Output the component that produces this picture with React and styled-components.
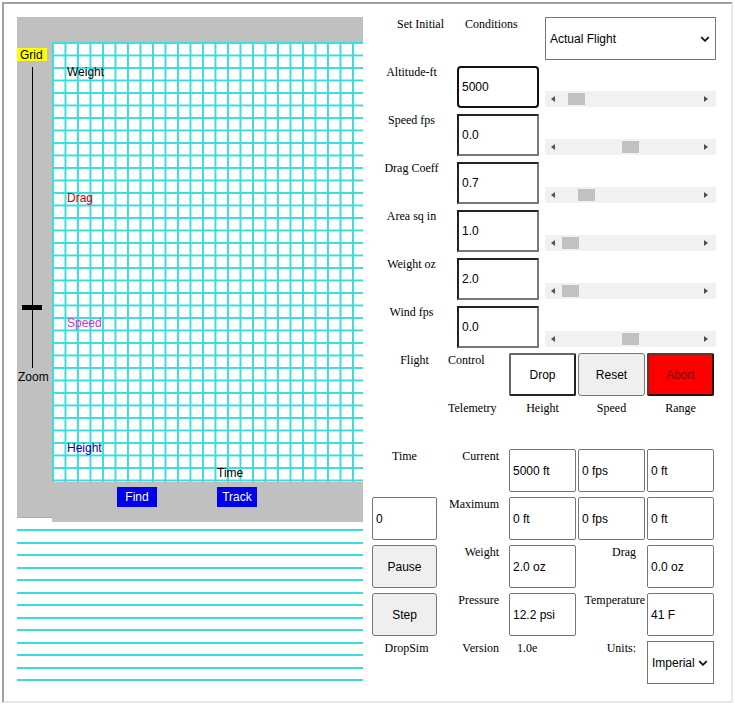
import React from 'react';
import styled, { createGlobalStyle } from 'styled-components';

const GlobalStyle = createGlobalStyle`
  body {
    margin: 0;
    background: #fff;
    font-family: "Liberation Serif", "Times New Roman", serif;
  }
`;

const sans = `"Liberation Sans", Arial, sans-serif`;
const cyan = '#3adcdc';

const Frame = styled.div`
  box-sizing: border-box;
  margin: 2px;
  width: 731px;
  height: 701px;
  border: 2px solid;
  border-color: #a0a0a0 #e8e8e8 #e8e8e8 #a0a0a0;
  padding: 13px 0 0 13px;
  display: flex;
  align-items: flex-start;
  gap: 5px;
`;

/* ---------- left: plot ---------- */

const Display = styled.div`
  width: 346px;
  display: flex;
  flex-direction: column;
`;

const Scope = styled.div`
  display: flex;
  align-items: flex-start;
  margin-bottom: -5px;
`;

const Rail = styled.div`
  box-sizing: border-box;
  width: 35px;
  height: 500px;
  background: #c0c0c0;
  padding-top: 31px;
  display: flex;
  flex-direction: column;
  align-items: flex-start;
  font-family: ${sans};
  font-size: 12px;
`;

const GridTag = styled.span`
  box-sizing: border-box;
  width: 30px;
  height: 13px;
  line-height: 15px;
  padding-left: 3px;
  background: #ffff00;
  color: #000;
  overflow: hidden;
`;

const ZoomLine = styled.div`
  position: relative;
  width: 1px;
  height: 301px;
  margin: 6px 0 0 15px;
  background: #000;
`;

const ZoomThumb = styled.div`
  position: absolute;
  left: -10px;
  width: 20px;
  height: 5px;
  background: #000;
`;

const ZoomText = styled.span`
  margin: 2px 0 0 1px;
  line-height: 14px;
`;

const Graph = styled.div`
  position: relative;
  z-index: 1;
  width: 311px;
  display: flex;
  flex-direction: column;
  background: #c0c0c0;
`;

const GraphTop = styled.div`
  height: 25px;
`;

const Plot = styled.div`
  position: relative;
  height: 440px;
  background-color: #fff;
  background-image:
    linear-gradient(to right, ${cyan} 0 1.5px, transparent 1.5px),
    linear-gradient(to bottom, ${cyan} 0 1.5px, transparent 1.5px);
  background-size: 12.5px 12.5px;
  font-family: ${sans};
  font-size: 12px;
  line-height: 14px;
`;

const Trace = styled.span`
  position: absolute;
  left: ${(p) => p.$x}px;
  top: ${(p) => p.$y}px;
  color: ${(p) => p.$color};
`;

const GraphFoot = styled.div`
  height: 40px;
  box-sizing: border-box;
  padding: 5px 0 0 65px;
  display: flex;
  align-items: flex-start;
  gap: 60px;
`;

const BlueButton = styled.button`
  width: 40px;
  height: 20px;
  padding: 0;
  border: none;
  background: #0000ee;
  color: #fff;
  font-family: ${sans};
  font-size: 12px;
`;

const Lines = styled.div`
  height: 172px;
  background: repeating-linear-gradient(
    to bottom,
    ${cyan} 0 1.5px,
    transparent 1.5px 12.5px
  );
`;

/* ---------- right: controls ---------- */

const Controls = styled.div`
  width: 350px;
  display: flex;
  flex-direction: column;
  gap: 5px;
  font-family: "Liberation Serif", "Times New Roman", serif;
  font-size: 12px;
  color: #000;
`;

const SetupRow = styled.div`
  height: 43px;
  display: grid;
  grid-template-columns: 89px 88px 171px;
`;

const TeleRow = styled.div`
  height: 43px;
  padding-left: 4px;
  display: grid;
  grid-template-columns: 65px 68px 67px 67px 67px;
  column-gap: 2px;
`;

const Label = styled.div`
  text-align: ${(p) => p.$align || 'center'};
  padding-left: ${(p) => p.$pl || 0}px;
  padding-right: ${(p) => p.$pr || 0}px;
  white-space: nowrap;
`;

const SetInput = styled.input`
  box-sizing: border-box;
  width: 82px;
  height: 42px;
  margin-top: 1px;
  padding: 0 0 0 3px;
  border: 2px solid;
  border-color: ${(p) => (p.$focus ? '#111' : '#222 #777 #777 #222')};
  border-radius: ${(p) => (p.$focus ? '4px' : '0')};
  outline: none;
  font-family: ${sans};
  font-size: 12px;
  color: #000;
  background: #fff;
`;

const Scroll = styled.div`
  position: relative;
  align-self: end;
  margin-bottom: 1px;
  height: 16px;
  background: #f1f1f1;
  display: flex;
  align-items: center;
  justify-content: space-between;
  padding: 0 8px 0 6px;
`;

const Arrow = styled.span`
  width: 0;
  height: 0;
  border-top: 3.5px solid transparent;
  border-bottom: 3.5px solid transparent;
  ${(p) => (p.$dir === 'left' ? 'border-right' : 'border-left')}: 4px solid #505050;
`;

const ScrollThumb = styled.div`
  position: absolute;
  top: 2px;
  width: 17px;
  height: 12px;
  background: #c1c1c1;
`;

const SelectWrap = styled.div`
  position: relative;
  width: ${(p) => p.$w}px;
  height: 43px;
`;

const Select = styled.select`
  appearance: none;
  box-sizing: border-box;
  width: 100%;
  height: 100%;
  padding: 0 0 0 4px;
  border: 1px solid #767676;
  border-radius: 0;
  background: #fff;
  color: #000;
  font-family: ${sans};
  font-size: 12px;
`;

const Chevron = styled.svg`
  position: absolute;
  right: ${(p) => p.$r}px;
  top: 50%;
  margin-top: -3px;
  pointer-events: none;
`;

const tones = {
  drop: 'background:#fff; border:2px solid; border-color:#666 #222 #222 #666; color:#000; border-radius:2px;',
  reset: 'background:#efefef; border:1px solid #767676; color:#000; border-radius:3px;',
  abort: 'background:#ff0000; border:2px solid; border-color:#6a3030 #2a1010 #2a1010 #6a3030; color:#7a0000; border-radius:2px;',
};

const CtlButton = styled.button`
  box-sizing: border-box;
  width: 100%;
  height: 43px;
  padding: 0;
  font-family: ${sans};
  font-size: 12px;
  ${(p) => tones[p.$tone]}
`;

const ReadBox = styled.input`
  box-sizing: border-box;
  width: 100%;
  height: 43px;
  padding: 0 0 0 3px;
  border: 1px solid #767676;
  border-radius: 2px;
  outline: none;
  font-family: ${sans};
  font-size: 12px;
  color: #000;
  background: #fff;
`;

const setup = [
  { label: 'Altitude-ft', value: '5000', thumb: 23, focus: true },
  { label: 'Speed fps', value: '0.0', thumb: 77 },
  { label: 'Drag Coeff', value: '0.7', thumb: 33 },
  { label: 'Area sq in', value: '1.0', thumb: 17 },
  { label: 'Weight oz', value: '2.0', thumb: 17 },
  { label: 'Wind fps', value: '0.0', thumb: 77 },
];

const Down = ({ r }) => (
  <Chevron $r={r} width="10" height="6" viewBox="0 0 10 6">
    <path d="M1.2 1.2 L5 4.8 L8.8 1.2" fill="none" stroke="#111" strokeWidth="1.8" />
  </Chevron>
);

const App = () => {
  return (
    <>
      <GlobalStyle />
      <Frame>
        <Display>
          <Scope>
            <Rail>
              <GridTag>Grid</GridTag>
              <ZoomLine>
                <ZoomThumb style={{ top: 238 }} />
              </ZoomLine>
              <ZoomText>Zoom</ZoomText>
            </Rail>
            <Graph>
              <GraphTop />
              <Plot>
                <Trace $x={15} $y={23} $color="#000">Weight</Trace>
                <Trace $x={15} $y={149} $color="#cc0000">Drag</Trace>
                <Trace $x={15} $y={274} $color="#cc33cc">Speed</Trace>
                <Trace $x={15} $y={399} $color="#0000aa">Height</Trace>
                <Trace $x={165} $y={424} $color="#000">Time</Trace>
              </Plot>
              <GraphFoot>
                <BlueButton>Find</BlueButton>
                <BlueButton>Track</BlueButton>
              </GraphFoot>
            </Graph>
          </Scope>
          <Lines />
        </Display>

        <Controls>
          <SetupRow>
            <Label $align="right" $pr={13}>Set Initial</Label>
            <Label $align="left" $pl={8}>Conditions</Label>
            <SelectWrap $w={171}>
              <Select defaultValue="actual">
                <option value="actual">Actual Flight</option>
                <option value="vacuum">Vacuum</option>
              </Select>
              <Down r={6} />
            </SelectWrap>
          </SetupRow>

          {setup.map((row) => (
            <SetupRow key={row.label}>
              <Label $pr={2}>{row.label}</Label>
              <SetInput $focus={row.focus} defaultValue={row.value} readOnly />
              <Scroll>
                <Arrow $dir="left" />
                <ScrollThumb style={{ left: row.thumb }} />
                <Arrow $dir="right" />
              </Scroll>
            </SetupRow>
          ))}

          <TeleRow>
            <Label $pl={20}>Flight</Label>
            <Label $align="left" $pl={9}>Control</Label>
            <CtlButton $tone="drop">Drop</CtlButton>
            <CtlButton $tone="reset">Reset</CtlButton>
            <CtlButton $tone="abort">Abort</CtlButton>
          </TeleRow>

          <TeleRow>
            <span />
            <Label $align="left" $pl={9}>Telemetry</Label>
            <Label>Height</Label>
            <Label>Speed</Label>
            <Label>Range</Label>
          </TeleRow>

          <TeleRow>
            <Label>Time</Label>
            <Label $align="right" $pr={8}>Current</Label>
            <ReadBox defaultValue="5000 ft" readOnly />
            <ReadBox defaultValue="0 fps" readOnly />
            <ReadBox defaultValue="0 ft" readOnly />
          </TeleRow>

          <TeleRow>
            <ReadBox defaultValue="0" readOnly />
            <Label $align="right" $pr={8}>Maximum</Label>
            <ReadBox defaultValue="0 ft" readOnly />
            <ReadBox defaultValue="0 fps" readOnly />
            <ReadBox defaultValue="0 ft" readOnly />
          </TeleRow>

          <TeleRow>
            <CtlButton $tone="reset">Pause</CtlButton>
            <Label $align="right" $pr={8}>Weight</Label>
            <ReadBox defaultValue="2.0 oz" readOnly />
            <Label $align="right" $pr={9}>Drag</Label>
            <ReadBox defaultValue="0.0 oz" readOnly />
          </TeleRow>

          <TeleRow>
            <CtlButton $tone="reset">Step</CtlButton>
            <Label $align="right" $pr={8}>Pressure</Label>
            <ReadBox defaultValue="12.2 psi" readOnly />
            <Label $align="right">Temperature</Label>
            <ReadBox defaultValue="41 F" readOnly />
          </TeleRow>

          <TeleRow>
            <Label $pl={4}>DropSim</Label>
            <Label $align="right" $pr={8}>Version</Label>
            <Label $align="left" $pl={8}>1.0e</Label>
            <Label $align="right" $pr={9}>Units:</Label>
            <SelectWrap $w={67}>
              <Select defaultValue="imperial">
                <option value="imperial">Imperial</option>
                <option value="metric">Metric</option>
              </Select>
              <Down r={6} />
            </SelectWrap>
          </TeleRow>
        </Controls>
      </Frame>
    </>
  );
};

export default App;
